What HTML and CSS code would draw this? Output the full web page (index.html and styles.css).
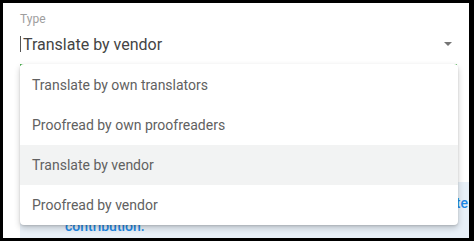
FILE: index.html
```html
<!DOCTYPE html>
<html lang="en">
<head>
    <meta charset="UTF-8">
    <meta name="viewport" content="width=device-width, initial-scale=1.0">
    <title>Type select</title>
    <link rel="stylesheet" href="styles.css">
</head>
<body>
    <div class="frame">
        <div class="field">
            <label class="field-label">Type</label>
            <div class="field-input">
                <span class="caret"></span>
                <span class="field-value">Translate by vendor</span>
                <span class="arrow"></span>
            </div>
            <div class="field-line"></div>
            <ul class="menu">
                <li class="menu-item">Translate by own translators</li>
                <li class="menu-item">Proofread by own proofreaders</li>
                <li class="menu-item active">Translate by vendor</li>
                <li class="menu-item">Proofread by vendor</li>
            </ul>
        </div>
        <div class="info">
            <div class="info-line info-first">The vendor you pick will be asked to complete</div>
            <div class="info-line">contribution.</div>
        </div>
    </div>
</body>
</html>
```

FILE: styles.css
```css
*{
    margin: 0;
    padding: 0;
    box-sizing: border-box;
}
body{
    width: 474px;
    height: 241px;
    overflow: hidden;
    background-color: #fff;
    font-family: Roboto, "Liberation Sans", sans-serif;
}
.frame{
    height: 241px;
    border-style: solid;
    border-color: #000;
    border-width: 3px 5px 3px 3px;
    background-color: #fff;
    overflow: hidden;
    padding-top: 8px;
}
.field{
    position: relative;
    margin: 0 12px 0 17px;
}
.field-label{
    display: block;
    font-size: 12px;
    line-height: 16px;
    color: #9e9e9e;
}
.field-input{
    display: flex;
    align-items: center;
    margin-top: 5px;
    height: 24px;
    font-size: 16px;
    color: #444;
}
.caret{
    width: 1px;
    height: 16px;
    background-color: #555;
    margin-right: 2px;
}
.field-value{
    flex: 1;
}
.arrow{
    width: 0;
    height: 0;
    border-left: 4px solid transparent;
    border-right: 4px solid transparent;
    border-top: 4px solid #757575;
    margin-right: 5px;
}
.field-line{
    margin-top: 8px;
    height: 2px;
    background-color: #4caf50;
}
.menu{
    position: absolute;
    top: 53px;
    left: 0;
    width: 438px;
    list-style: none;
    background-color: #fff;
    border-radius: 4px;
    box-shadow: 0 1px 2px rgba(0, 0, 0, 0.12), 0 3px 6px rgba(0, 0, 0, 0.2);
    z-index: 2;
}
.menu-item{
    height: 40px;
    line-height: 40px;
    padding-left: 12px;
    font-size: 14px;
    color: #616161;
    cursor: pointer;
}
.menu-item:first-child{
    height: 41px;
    line-height: 42px;
}
.menu-item.active{
    background-color: #f2f3f3;
}
.info{
    margin: 116px 0 0 17px;
    padding-top: 10px;
    height: 80px;
    background-color: #e8f0f8;
    color: #1e88e5;
    font-size: 14px;
    font-weight: 500;
    line-height: 23px;
}
.info-line{
    padding-left: 45px;
    white-space: nowrap;
}
.info-first{
    text-align: right;
    padding-right: 1px;
}
```
